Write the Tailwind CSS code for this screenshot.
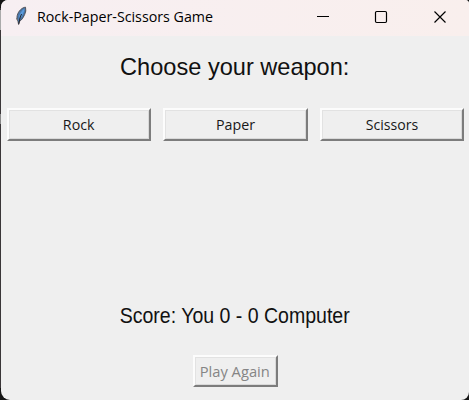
<!DOCTYPE html>
<html lang="en">
<head>
<meta charset="utf-8">
<title>Rock-Paper-Scissors Game</title>
<script src="https://cdn.jsdelivr.net/npm/@tailwindcss/browser@4"></script>
</head>
<body class="relative h-[400px] w-[469px] overflow-hidden bg-[#151515] pl-px font-['Open_Sans','Noto_Sans',sans-serif] text-black">
  <div class="absolute left-0 top-2 h-[380px] w-px bg-[#3a3638]"></div>
  <div class="absolute left-0 top-2.5 h-5 w-px bg-[#aaa]"></div>
  <div class="absolute left-0 top-[114px] h-2.5 w-px bg-[#888]"></div>
  <main class="relative flex h-[400px] w-[468px] flex-col overflow-hidden rounded-tl-[7px] rounded-tr-[4px] rounded-bl-[9px] rounded-br-[8px] bg-[#efefef]">
    <header class="flex h-9 shrink-0 items-center bg-linear-to-r from-[#f7eff2] to-[#f9efed] pl-3.5">
      <svg class="-mt-1 h-5 w-3 shrink-0" viewBox="0 0 12 20">
        <path d="M10.5 1.2C7 1.5 3.4 5 2.3 9.2C1.6 12 2 14 3 15.5L3.6 18.5L4.4 15.6C7 14 9.8 9.5 10.8 5Z" fill="#4a78ab" stroke="#4b4a4e" stroke-width="0.9"/>
        <path d="M9.4 2.7C6.3 4.7 4 8.8 3.7 12.7L6.5 10.4C8.3 7.7 9.3 5.3 9.4 2.7Z" fill="#5b9bdc"/>
        <path d="M6.6 8L5.2 11L3.8 17.8" fill="none" stroke="#20252f" stroke-width="1"/>
        <path d="M1.5 12L2.6 14.5" stroke="#777" stroke-width="1"/>
      </svg>
      <h1 class="ml-2.5 -mt-1 w-[177px] whitespace-nowrap text-[15px] leading-5"><span class="inline-block origin-left scale-x-[0.95]">Rock-Paper-Scissors Game</span></h1>
      <div class="-mt-1 ml-auto flex items-center">
        <svg class="h-5 w-[58px]" viewBox="0 0 58 20"><path d="M22 10.5H34" stroke="#000" fill="none"/></svg>
        <svg class="h-5 w-[58px]" viewBox="0 0 58 20"><rect x="22.5" y="5.5" width="11" height="11" rx="1.2" fill="none" stroke="#000" stroke-width="1.2"/></svg>
        <svg class="h-5 w-[58px]" viewBox="0 0 58 20"><path d="M23.5 5.5L34.5 16.5M34.5 5.5L23.5 16.5" stroke="#000" stroke-width="1.15" fill="none"/></svg>
      </div>
    </header>
    <h2 class="mt-[17px] flex h-7 items-center justify-center whitespace-nowrap font-['Liberation_Sans',sans-serif] text-[24px] text-[#111]"><span class="inline-block scale-x-[0.982]">Choose your weapon:</span></h2>
    <div class="mt-[27px] flex gap-3 pl-1.5">
      <button class="flex h-[33px] w-[144px] items-center justify-center border-2 border-t-[#fcfcfc] border-l-[#fcfcfc] border-r-[#7c7c7c] border-b-[#7c7c7c] text-[15px] text-[#181818] shadow-[inset_1px_1px_#e2e2e2,inset_-1px_-1px_#d9d9d9]"><span class="inline-block scale-x-[0.95]">Rock</span></button>
      <button class="flex h-[33px] w-[145px] items-center justify-center border-2 border-t-[#fcfcfc] border-l-[#fcfcfc] border-r-[#7c7c7c] border-b-[#7c7c7c] text-[15px] text-[#181818] shadow-[inset_1px_1px_#e2e2e2,inset_-1px_-1px_#d9d9d9]"><span class="inline-block scale-x-[0.95]">Paper</span></button>
      <button class="flex h-[33px] w-[144px] items-center justify-center border-2 border-t-[#fcfcfc] border-l-[#fcfcfc] border-r-[#7c7c7c] border-b-[#7c7c7c] text-[15px] text-[#181818] shadow-[inset_1px_1px_#e2e2e2,inset_-1px_-1px_#d9d9d9]"><span class="inline-block scale-x-[0.94]">Scissors</span></button>
    </div>
    <p class="mt-[161px] flex h-7 items-center justify-center whitespace-nowrap font-['Liberation_Sans',sans-serif] text-[21.5px] text-[#111]"><span class="inline-block scale-x-[0.908]">Score: You 0 - 0 Computer</span></p>
    <div class="mt-[25px] flex justify-center">
      <button disabled class="flex h-8 w-[85px] items-center justify-center whitespace-nowrap border-2 border-t-[#fcfcfc] border-l-[#fcfcfc] border-r-[#7c7c7c] border-b-[#7c7c7c] text-[15px] text-[#858585] shadow-[inset_1px_1px_#e2e2e2,inset_-1px_-1px_#d9d9d9]"><span class="inline-block scale-x-[0.98]">Play Again</span></button>
    </div>
  </main>
</body>
</html>
